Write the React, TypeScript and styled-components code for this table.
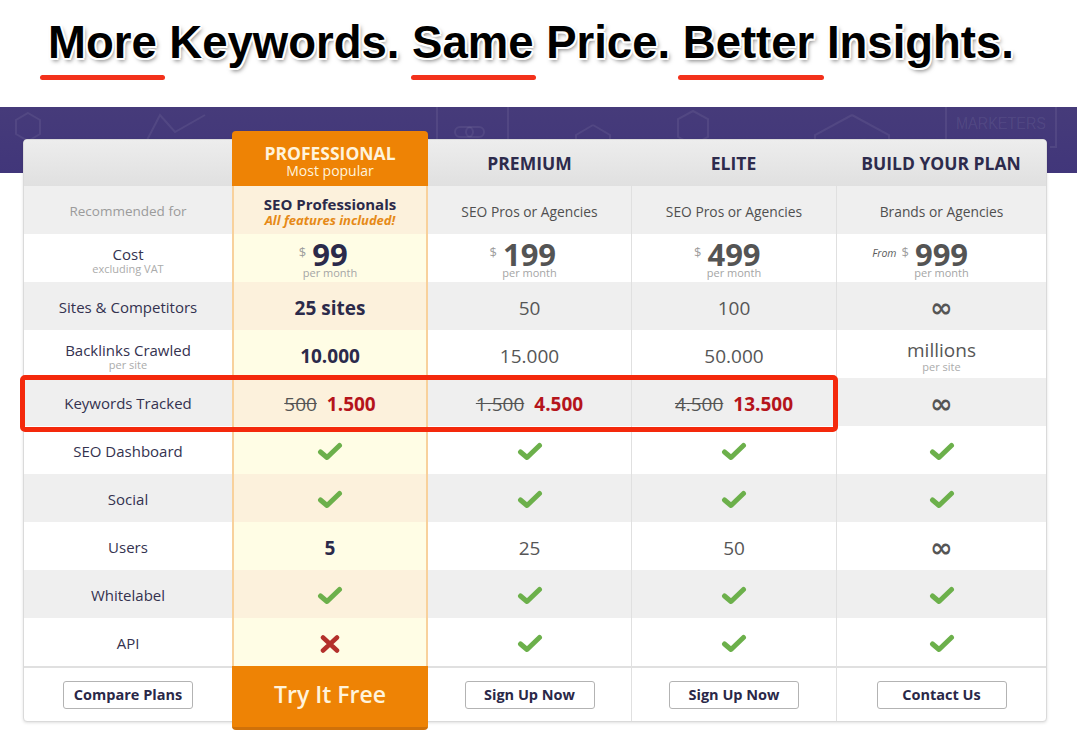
import React from 'react';
import styled, { createGlobalStyle } from 'styled-components';

const GlobalStyle = createGlobalStyle`
  body {
    margin: 0;
    background: #ffffff;
    font-family: "Open Sans", "Liberation Sans", sans-serif;
  }
`;

const Page = styled.div`
  width: 1077px;
  min-height: 747px;
  background: #ffffff;
`;

const Headline = styled.h1`
  margin: 0;
  height: 107px;
  box-sizing: border-box;
  padding: 17px 0 0 48px;
  font-family: "Liberation Sans", Arial, sans-serif;
  font-size: 45.5px;
  font-weight: 700;
  line-height: 52px;
  color: #000000;
  white-space: nowrap;
  text-shadow:
    -1.5px -1.5px 0 #fff, 1.5px -1.5px 0 #fff, -1.5px 1.5px 0 #fff, 1.5px 1.5px 0 #fff,
    0 -2px 0 #fff, 0 2px 0 #fff, -2px 0 0 #fff, 2px 0 0 #fff,
    2px 3px 4px rgba(0, 0, 0, 0.5);
`;

const Marked = styled.span<{ $left: number; $right: number }>`
  position: relative;

  &::after {
    content: '';
    position: absolute;
    left: ${({ $left }) => -$left}px;
    right: ${({ $right }) => -$right}px;
    bottom: -12px;
    height: 5px;
    border-radius: 3px;
    background: #f3311b;
  }
`;

const Stage = styled.section`
  position: relative;
  padding: 24px 30px 17px 23px;
  background: linear-gradient(180deg, #463b7a 0, #41367a 66px, #ffffff 66px);
`;

const BannerArt = styled.svg`
  position: absolute;
  top: 0;
  left: 0;
  width: 1077px;
  height: 66px;
  pointer-events: none;
`;

const Table = styled.div`
  position: relative;
  display: flex;
  align-items: flex-start;
  width: 1022px;
  margin-top: 8px;
  border: 1px solid #dadada;
  border-radius: 4px;
  background: #ffffff;
  box-shadow: 0 1px 3px rgba(0, 0, 0, 0.12);
`;

const Column = styled.div<{ $width: number }>`
  display: flex;
  flex-direction: column;
  width: ${({ $width }) => $width}px;
`;

const HeaderCell = styled.div<{ $first?: boolean; $last?: boolean }>`
  height: 46px;
  display: flex;
  align-items: center;
  justify-content: center;
  background: linear-gradient(180deg, #ededed, #e0e0e0);
  border-top-left-radius: ${({ $first }) => ($first ? '3px' : '0')};
  border-top-right-radius: ${({ $last }) => ($last ? '3px' : '0')};
  font-size: 17.5px;
  font-weight: 700;
  color: #2d2b4c;
`;

const Cell = styled.div<{ $tone: 'gray' | 'white'; $divided?: boolean }>`
  box-sizing: border-box;
  height: 48px;
  padding-top: 3px;
  display: flex;
  flex-direction: column;
  align-items: center;
  justify-content: center;
  background: ${({ $tone }) => ($tone === 'gray' ? '#efefef' : '#ffffff')};
  border-left: ${({ $divided }) => ($divided ? '1px solid #e0e0e0' : 'none')};
`;

const ActionCell = styled.div<{ $divided?: boolean }>`
  box-sizing: border-box;
  height: 55px;
  display: flex;
  align-items: center;
  justify-content: center;
  border-top: 2px solid #e0e0e0;
  border-left: ${({ $divided }) => ($divided ? '1px solid #e0e0e0' : 'none')};
`;

const ProColumn = styled.div`
  position: relative;
  z-index: 1;
  display: flex;
  flex-direction: column;
  width: 196px;
  margin: -9px 0 -9px;
`;

const ProHeader = styled.div`
  height: 55px;
  box-sizing: border-box;
  padding-top: 6px;
  display: flex;
  flex-direction: column;
  align-items: center;
  justify-content: center;
  background: #ee8305;
  border-radius: 4px 4px 0 0;
  color: #fff3dc;
`;

const ProTitle = styled.div`
  font-size: 17.5px;
  font-weight: 700;
  line-height: 19px;
`;

const ProSubtitle = styled.div`
  font-size: 14px;
  line-height: 16px;
`;

const ProBody = styled.div`
  border-left: 2px solid #f8d19c;
  border-right: 2px solid #f8d19c;
`;

const ProCell = styled.div<{ $tone: 'gray' | 'white' }>`
  box-sizing: border-box;
  height: 48px;
  padding-top: 3px;
  display: flex;
  flex-direction: column;
  align-items: center;
  justify-content: center;
  background: ${({ $tone }) => ($tone === 'gray' ? '#fcf1dc' : '#fffde5')};
`;

const TryButton = styled.button`
  height: 64px;
  border: none;
  border-bottom: 3px solid #cf7109;
  border-radius: 0 0 4px 4px;
  background: #ee8305;
  color: #fff3dc;
  font-family: "Open Sans", sans-serif;
  font-size: 23px;
  font-weight: 600;
  padding: 0 0 6px;
  cursor: pointer;
`;

const OutlineButton = styled.button`
  width: 130px;
  height: 28px;
  padding: 0;
  background: #ffffff;
  border: 1px solid #b3b3b3;
  border-radius: 3px;
  font-family: "Open Sans", sans-serif;
  font-size: 14.5px;
  font-weight: 700;
  color: #2a2848;
  cursor: pointer;
`;

const FeatureName = styled.div<{ $muted?: boolean }>`
  font-size: ${({ $muted }) => ($muted ? '13.5px' : '15px')};
  line-height: 17px;
  color: ${({ $muted }) => ($muted ? '#9b9b9b' : '#34324f')};
`;

const SubText = styled.div`
  font-size: 11px;
  line-height: 11px;
  color: #ababab;
`;

const Audience = styled.div`
  font-size: 13.8px;
  color: #4f4f4f;
`;

const ProAudience = styled.div`
  font-size: 15px;
  font-weight: 700;
  line-height: 17px;
  color: #2b2a4a;
`;

const ProNote = styled.div`
  font-size: 13px;
  font-weight: 700;
  font-style: italic;
  line-height: 15px;
  color: #e68a17;
`;

const Value = styled.div<{ $strong?: boolean }>`
  font-size: 19px;
  line-height: 22px;
  font-weight: ${({ $strong }) => ($strong ? 700 : 400)};
  color: ${({ $strong }) => ($strong ? '#2b2a4a' : '#565656')};
`;

const Amount = styled.div<{ $strong?: boolean }>`
  position: relative;
  margin-top: 1px;
  font-size: 31px;
  font-weight: 700;
  line-height: 25px;
  color: ${({ $strong }) => ($strong ? '#2b2a4a' : '#545454')};
`;

const Prefix = styled.span`
  position: absolute;
  right: 100%;
  top: 3px;
  margin-right: 6px;
  white-space: nowrap;
  font-size: 13px;
  font-weight: 400;
  line-height: 14px;
  color: #9d9d9d;
`;

const From = styled.i`
  margin-right: 5px;
  font-size: 10.5px;
  color: #5b5b5b;
`;

const PerMonth = styled.div`
  font-size: 11px;
  line-height: 12px;
  color: #a5a5a5;
`;

const Keywords = styled.div`
  display: flex;
  gap: 10px;
  font-size: 19px;
  line-height: 22px;
`;

const OldCount = styled.span`
  color: #555555;
  text-decoration: line-through;
`;

const NewCount = styled.span`
  color: #b5141b;
  font-weight: 700;
`;

const Infinity = styled.div`
  font-family: "DejaVu Sans", sans-serif;
  font-size: 27px;
  font-weight: 700;
  line-height: 22px;
  color: #555555;
`;

const Highlight = styled.div`
  position: absolute;
  left: 20px;
  top: 268px;
  width: 818px;
  height: 57px;
  box-sizing: border-box;
  border: 5px solid #f4290c;
  border-radius: 5px;
  z-index: 2;
  pointer-events: none;
`;

const Check = () => (
  <svg width="26" height="19" viewBox="0 0 26 19">
    <path d="M3.5 10 L10 15.5 L22.5 3.5" fill="none" stroke="#6cb04b" strokeWidth="5" strokeLinecap="round" strokeLinejoin="round" />
  </svg>
);

const Cross = () => (
  <svg width="20" height="18" viewBox="0 0 20 18">
    <path d="M3 2.5 L17 15.5 M17 2.5 L3 15.5" fill="none" stroke="#b3302b" strokeWidth="4.5" strokeLinecap="round" />
  </svg>
);

type Tone = 'gray' | 'white';
const toneOf = (i: number): Tone => (i % 2 === 0 ? 'gray' : 'white');

const features: { name: string; sub?: string; muted?: boolean }[] = [
  { name: 'Recommended for', muted: true },
  { name: 'Cost', sub: 'excluding VAT' },
  { name: 'Sites & Competitors' },
  { name: 'Backlinks Crawled', sub: 'per site' },
  { name: 'Keywords Tracked' },
  { name: 'SEO Dashboard' },
  { name: 'Social' },
  { name: 'Users' },
  { name: 'Whitelabel' },
  { name: 'API' },
];

const price = (amount: string, strong = false, from = false) => (
  <>
    <Amount $strong={strong}>
      <Prefix>
        {from && <From>From</From>}$
      </Prefix>
      {amount}
    </Amount>
    <PerMonth>per month</PerMonth>
  </>
);

const keywords = (oldCount: string, newCount: string) => (
  <Keywords>
    <OldCount>{oldCount}</OldCount>
    <NewCount>{newCount}</NewCount>
  </Keywords>
);

const proCells: React.ReactNode[] = [
  <>
    <ProAudience>SEO Professionals</ProAudience>
    <ProNote>All features included!</ProNote>
  </>,
  price('99', true),
  <Value $strong>25 sites</Value>,
  <Value $strong>10.000</Value>,
  keywords('500', '1.500'),
  <Check />,
  <Check />,
  <Value $strong>5</Value>,
  <Check />,
  <Cross />,
];

const plans: { title: string; width: number; divided: boolean; cta: string; cells: React.ReactNode[] }[] = [
  {
    title: 'PREMIUM',
    width: 203,
    divided: false,
    cta: 'Sign Up Now',
    cells: [
      <Audience>SEO Pros or Agencies</Audience>,
      price('199'),
      <Value>50</Value>,
      <Value>15.000</Value>,
      keywords('1.500', '4.500'),
      <Check />,
      <Check />,
      <Value>25</Value>,
      <Check />,
      <Check />,
    ],
  },
  {
    title: 'ELITE',
    width: 205,
    divided: true,
    cta: 'Sign Up Now',
    cells: [
      <Audience>SEO Pros or Agencies</Audience>,
      price('499'),
      <Value>100</Value>,
      <Value>50.000</Value>,
      keywords('4.500', '13.500'),
      <Check />,
      <Check />,
      <Value>50</Value>,
      <Check />,
      <Check />,
    ],
  },
  {
    title: 'BUILD YOUR PLAN',
    width: 210,
    divided: true,
    cta: 'Contact Us',
    cells: [
      <Audience>Brands or Agencies</Audience>,
      price('999', false, true),
      <Infinity>∞</Infinity>,
      <>
        <Value>millions</Value>
        <SubText>per site</SubText>
      </>,
      <Infinity>∞</Infinity>,
      <Check />,
      <Check />,
      <Infinity>∞</Infinity>,
      <Check />,
      <Check />,
    ],
  },
];

const Banner = () => (
  <BannerArt viewBox="0 0 1077 66">
    <g fill="none" stroke="rgba(255,255,255,0.07)" strokeWidth="2">
      <path d="M28 6 L40 13 L40 27 L28 34 L16 27 L16 13 Z" />
      <path d="M130 66 L160 8 L175 25 L205 8" />
      <path d="M437 0 L437 66 M508 0 L508 66" />
      <rect x="455" y="20" width="18" height="10" rx="5" />
      <rect x="466" y="20" width="18" height="10" rx="5" />
      <path d="M593 18 L610 28 L610 48 M576 48 L576 28 L593 18" />
      <path d="M693 4 L708 12 L708 30 L693 38 L678 30 L678 12 Z" />
      <path d="M852 8 L889 28 L889 66 M815 66 L815 28 L852 8" />
      <path d="M840 50 Q852 28 872 34 Q858 40 848 60" />
      <path d="M946 0 L946 40 L952 40 M1056 0 L1056 40 L1050 40" />
    </g>
    <text
      x="956"
      y="22"
      fill="rgba(255,255,255,0.08)"
      fontFamily="Liberation Sans, sans-serif"
      fontSize="16"
      textLength="90"
      lengthAdjust="spacingAndGlyphs"
    >
      MARKETERS
    </text>
  </BannerArt>
);

const App = () => (
  <Page>
    <GlobalStyle />
    <Headline>
      <Marked $left={8} $right={8}>More</Marked> Keywords. <Marked $left={1} $right={2}>Same</Marked> Price.{' '}
      <Marked $left={5} $right={10}>Better</Marked> Insights.
    </Headline>
    <Stage>
      <Banner />
      <Table>
        <Column $width={208}>
          <HeaderCell $first />
          {features.map((f, i) => (
            <Cell key={f.name} $tone={toneOf(i)}>
              <FeatureName $muted={f.muted}>{f.name}</FeatureName>
              {f.sub && <SubText>{f.sub}</SubText>}
            </Cell>
          ))}
          <ActionCell>
            <OutlineButton>Compare Plans</OutlineButton>
          </ActionCell>
        </Column>

        <ProColumn>
          <ProHeader>
            <ProTitle>PROFESSIONAL</ProTitle>
            <ProSubtitle>Most popular</ProSubtitle>
          </ProHeader>
          <ProBody>
            {proCells.map((content, i) => (
              <ProCell key={i} $tone={toneOf(i)}>
                {content}
              </ProCell>
            ))}
          </ProBody>
          <TryButton>Try It Free</TryButton>
        </ProColumn>

        {plans.map((plan, p) => (
          <Column key={plan.title} $width={plan.width}>
            <HeaderCell $last={p === plans.length - 1}>{plan.title}</HeaderCell>
            {plan.cells.map((content, i) => (
              <Cell key={i} $tone={toneOf(i)} $divided={plan.divided}>
                {content}
              </Cell>
            ))}
            <ActionCell $divided={plan.divided}>
              <OutlineButton>{plan.cta}</OutlineButton>
            </ActionCell>
          </Column>
        ))}
      </Table>
      <Highlight />
    </Stage>
  </Page>
);

export default App;
